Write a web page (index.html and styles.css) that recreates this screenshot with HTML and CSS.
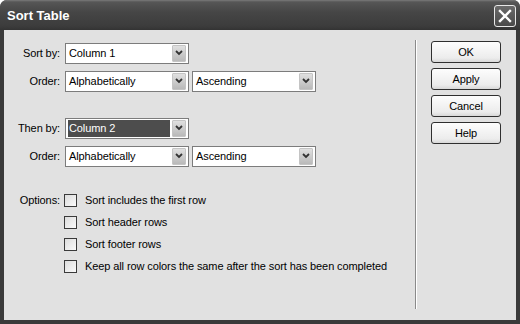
FILE: index.html
```html
<!DOCTYPE html>
<html>
<head>
  <meta charset="utf-8" />
  <title>Sort Table</title>
  <link rel="stylesheet" href="styles.css">
</head>
<body>
  <div class="window">
    <div class="titlebar">
      <span class="title">Sort Table</span>
      <span class="close">
        <svg width="14" height="14" viewBox="0 0 14 14"><path d="M2 2 L12 12 M12 2 L2 12" stroke="#fff" stroke-width="2.4" stroke-linecap="square" fill="none"/></svg>
      </span>
    </div>

    <div class="client">
      <div class="form">
        <div class="row">
          <label class="lbl">Sort by:</label>
          <div class="combo"><span class="value">Column 1</span><span class="arrow"><svg width="8" height="6" viewBox="0 0 8 6"><path d="M1 1 L4 4 L7 1" stroke="#333" stroke-width="1.8" fill="none"/></svg></span></div>
        </div>
        <div class="row">
          <label class="lbl">Order:</label>
          <div class="combo"><span class="value">Alphabetically</span><span class="arrow"><svg width="8" height="6" viewBox="0 0 8 6"><path d="M1 1 L4 4 L7 1" stroke="#333" stroke-width="1.8" fill="none"/></svg></span></div>
          <div class="combo"><span class="value">Ascending</span><span class="arrow"><svg width="8" height="6" viewBox="0 0 8 6"><path d="M1 1 L4 4 L7 1" stroke="#333" stroke-width="1.8" fill="none"/></svg></span></div>
        </div>

        <div class="row group">
          <label class="lbl">Then by:</label>
          <div class="combo"><span class="value selected">Column 2</span><span class="arrow"><svg width="8" height="6" viewBox="0 0 8 6"><path d="M1 1 L4 4 L7 1" stroke="#333" stroke-width="1.8" fill="none"/></svg></span></div>
        </div>
        <div class="row">
          <label class="lbl">Order:</label>
          <div class="combo"><span class="value">Alphabetically</span><span class="arrow"><svg width="8" height="6" viewBox="0 0 8 6"><path d="M1 1 L4 4 L7 1" stroke="#333" stroke-width="1.8" fill="none"/></svg></span></div>
          <div class="combo"><span class="value">Ascending</span><span class="arrow"><svg width="8" height="6" viewBox="0 0 8 6"><path d="M1 1 L4 4 L7 1" stroke="#333" stroke-width="1.8" fill="none"/></svg></span></div>
        </div>

        <div class="options">
          <label class="lbl">Options:</label>
          <div class="checks">
            <div class="check"><span class="box"></span>Sort includes the first row</div>
            <div class="check"><span class="box"></span>Sort header rows</div>
            <div class="check"><span class="box"></span>Sort footer rows</div>
            <div class="check"><span class="box"></span>Keep all row colors the same after the sort has been completed</div>
          </div>
        </div>
      </div>

      <div class="sep"></div>

      <div class="buttons">
        <button>OK</button>
        <button>Apply</button>
        <button>Cancel</button>
        <button>Help</button>
      </div>
    </div>
  </div>
</body>
</html>
```

FILE: styles.css
```css
body {
  margin: 0;
  font-family: "Liberation Sans", Arial, sans-serif;
  font-size: 11px;
  letter-spacing: -0.1px;
  color: #000;
  background: #fff;
}
.window {
  width: 520px;
  height: 324px;
  background: #3a3a3a;
  border-radius: 7px 7px 0 0;
  box-sizing: border-box;
  padding: 0 4px 4px;
  display: flex;
  flex-direction: column;
}
.titlebar {
  height: 30px;
  margin: 0 -4px;
  padding: 0 4px 0 7px;
  border-radius: 7px 7px 0 0;
  background: linear-gradient(#7a7a7a 0, #565656 2px, #464646 12px, #3c3c3c 26px, #333 30px);
  display: flex;
  align-items: center;
  justify-content: space-between;
}
.title {
  color: #fff;
  font-weight: bold;
  font-size: 13px;
  letter-spacing: 0;
  padding-top: 1px;
}
.close {
  width: 20px;
  height: 20px;
  margin-top: 1px;
  border: 1px solid #e8e8e8;
  border-radius: 3px;
  background: linear-gradient(#6a6a6a, #4a4a4a);
  display: flex;
  align-items: center;
  justify-content: center;
}
.client {
  flex: 1;
  background: #e1e1e1;
  display: flex;
}
.form {
  flex: 1;
  padding: 12px 0 0 10px;
}
.row {
  display: flex;
  align-items: center;
  height: 22px;
  margin-bottom: 6px;
}
.row.group {
  margin-top: 25px;
}
.lbl {
  width: 46px;
  margin-right: 5px;
  text-align: right;
}
.combo {
  width: 124px;
  height: 21px;
  box-sizing: border-box;
  border: 1px solid #7c7c7c;
  background: #fff;
  display: flex;
  align-items: center;
  justify-content: space-between;
  padding: 0 2px 0 2px;
  margin-right: 3px;
}
.value {
  height: 17px;
  line-height: 17px;
  padding: 0 1px;
  flex: 1;
  margin-right: 2px;
}
.value.selected {
  background: #4d4d4d;
  color: #fff;
}
.arrow {
  width: 14px;
  height: 17px;
  box-sizing: border-box;
  border: 1px solid #c4c4c4;
  border-radius: 1px;
  background: linear-gradient(#e0e0e0, #b9b9b9);
  display: flex;
  align-items: center;
  justify-content: center;
}
.options {
  display: flex;
  margin-top: 22px;
}
.options .lbl {
  height: 22px;
  line-height: 22px;
  margin-right: 4px;
}
.check {
  display: flex;
  align-items: center;
  height: 22px;
}
.box {
  width: 13px;
  height: 13px;
  box-sizing: border-box;
  border: 1px solid #3a3a3a;
  background: linear-gradient(135deg, #dcdcdc, #fafafa);
  margin-right: 8px;
}
.sep {
  width: 1px;
  margin: 10px 0 11px;
  background: #8a8a8a;
  border-right: 1px solid #fff;
}
.buttons {
  width: 70px;
  margin: 11px 15px 0 14px;
  display: flex;
  flex-direction: column;
  gap: 5px;
}
button {
  height: 22px;
  font-family: inherit;
  font-size: 11px;
  letter-spacing: -0.1px;
  color: #000;
  background: linear-gradient(#fdfdfd, #ececec 80%, #d8d8d8);
  border: 1px solid #2f2f2f;
  border-radius: 3px;
  padding: 0;
}
```
